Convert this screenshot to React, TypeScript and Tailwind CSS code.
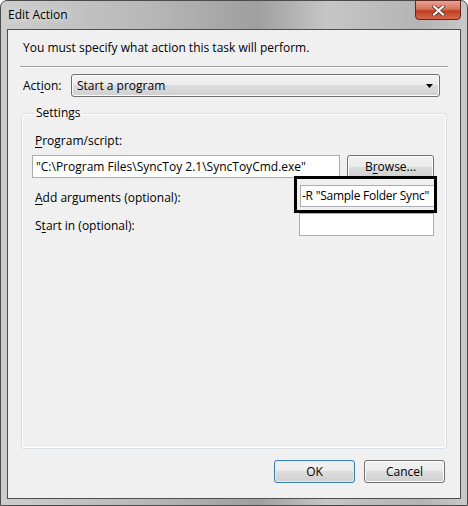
import React from 'react';

const font = "font-['Open_Sans',sans-serif]";

function WinButton({ label, mnemonic, isDefault, className }: { label: string; mnemonic?: number; isDefault?: boolean; className?: string }) {
  const text =
    mnemonic === undefined ? (
      label
    ) : (
      <>
        {label.slice(0, mnemonic)}
        <span className="underline underline-offset-2">{label[mnemonic]}</span>
        {label.slice(mnemonic + 1)}
      </>
    );
  return (
    <button
      className={`flex items-center justify-center rounded-[3px] border text-[12px] text-black bg-[linear-gradient(#f2f2f2_0%,#ebebeb_50%,#dddddd_50%,#cfcfcf_100%)] ${
        isDefault ? 'border-[#3c7fb1] shadow-[inset_0_0_0_1px_#d6ecf7]' : 'border-[#707070] shadow-[inset_0_0_0_1px_#fcfcfc]'
      } ${className ?? ''}`}
    >
      {text}
    </button>
  );
}

function Label({ text, mnemonic }: { text: string; mnemonic: number }) {
  return (
    <span className="text-[12px] text-black leading-[16px]">
      {text.slice(0, mnemonic)}
      <span className="underline underline-offset-2">{text[mnemonic]}</span>
      {text.slice(mnemonic + 1)}
    </span>
  );
}

export default function App() {
  return (
    <div className={`${font} w-[468px] h-[506px] bg-white`}>
      {/* Window frame */}
      <div className="relative w-[468px] h-[506px] flex flex-col rounded-t-[7px] border border-[#4b4b4b] bg-[linear-gradient(90deg,#cdcdcd_0%,#b9b9b9_30%,#9f9f9f_55%,#c6c6c6_70%,#b4b4b4_90%,#c9c9c9_100%)]">
        {/* Title bar */}
        <div className="h-[28px] flex items-center pl-[7px] shrink-0">
          <span className="text-[12px] text-black [text-shadow:0_0_6px_rgba(255,255,255,0.9)]">Edit Action</span>
        </div>
        {/* Close button */}
        <div className="absolute top-[-1px] right-[6px] w-[46px] h-[20px] rounded-b-[4px] border border-[#5c2a20] bg-[linear-gradient(#e8a493_0%,#d6725c_45%,#c03f22_55%,#d5684a_100%)] flex items-center justify-center">
          <svg width="13" height="11" viewBox="0 0 13 11">
            <path d="M2 1.5 L11 9.5 M11 1.5 L2 9.5" stroke="#4a2a22" strokeWidth="3.6" strokeLinecap="square" />
            <path d="M2 1.5 L11 9.5 M11 1.5 L2 9.5" stroke="#ffffff" strokeWidth="2.2" strokeLinecap="square" />
          </svg>
        </div>

        {/* Client area */}
        <div className="flex-1 mx-[6px] mb-[6px] border border-[#4f4f4f] bg-[#f0f0f0] flex flex-col">
          <div className="pl-[15px] pt-[10px] h-[28px] text-[12px] leading-[16px] text-black">
            You must specify what action this task will perform.
          </div>
          <div className="mx-[12px] mt-[8px] h-[2px] border-t border-[#a0a0a0] border-b border-b-white" />

          {/* Action row */}
          <div className="flex items-center mt-[6px] pl-[15px] pr-[20px]">
            <span className="w-[48px] text-[12px] leading-[16px]">
              Act<span className="underline underline-offset-2">i</span>on:
            </span>
            <div className="flex-1 h-[23px] rounded-[3px] border border-[#707070] bg-[linear-gradient(#f2f2f2_0%,#ebebeb_50%,#dddddd_50%,#cfcfcf_100%)] shadow-[inset_0_0_0_1px_#fcfcfc] flex items-center pl-[5px] pr-[6px]">
              <span className="flex-1 text-[12px] leading-[16px]">Start a program</span>
              <svg width="7" height="4" viewBox="0 0 7 4">
                <path d="M0 0 H7 L3.5 4 Z" fill="#000" />
              </svg>
            </div>
          </div>

          {/* Settings group */}
          <fieldset className="mx-[13px] mt-[8px] h-[344px] rounded-[3px] border border-[#d5dfe5] shadow-[inset_0_0_0_1px_#ffffff] px-[10px]">
            <legend className="ml-[2px] px-[2px] text-[12px] leading-[16px]">Settings</legend>

            <div className="mt-[12px] pl-[3px] h-[16px] flex items-center">
              <Label text="Program/script:" mnemonic={0} />
            </div>
            <div className="flex items-center mt-[6px] gap-[7px]">
              <div className="w-[308px] h-[23px] border border-[#abadb3] bg-white flex items-center pl-[3px] text-[12px]">
                "C:\Program Files\SyncToy 2.1\SyncToyCmd.exe"
              </div>
              <WinButton label="Browse..." mnemonic={1} className="w-[87px] h-[23px]" />
            </div>

            <div className="flex items-center justify-between mt-[6px] pr-[1px]">
              <div className="pl-[3px]">
                <Label text="Add arguments (optional):" mnemonic={0} />
              </div>
              <div className="relative w-[135px] h-[22px] border border-[#abadb3] bg-white flex items-center pl-[1px] text-[12px] tracking-[-0.25px] whitespace-nowrap">
                -R "Sample Folder Sync"
                {/* annotation highlight */}
                <div className="absolute left-[-7px] right-[-3px] top-[-10px] bottom-[-7px] border-[3px] border-black" />
              </div>
            </div>

            <div className="flex items-center justify-between mt-[4px] pr-[2px]">
              <div className="pl-[3px]">
                <Label text="Start in (optional):" mnemonic={1} />
              </div>
              <div className="w-[135px] h-[23px] border border-[#abadb3] bg-white" />
            </div>
          </fieldset>

          {/* Bottom buttons */}
          <div className="flex justify-end gap-[9px] pr-[15px] mt-[11px]">
            <WinButton label="OK" isDefault className="w-[81px] h-[23px]" />
            <WinButton label="Cancel" className="w-[81px] h-[23px]" />
          </div>
        </div>
      </div>
    </div>
  );
}
